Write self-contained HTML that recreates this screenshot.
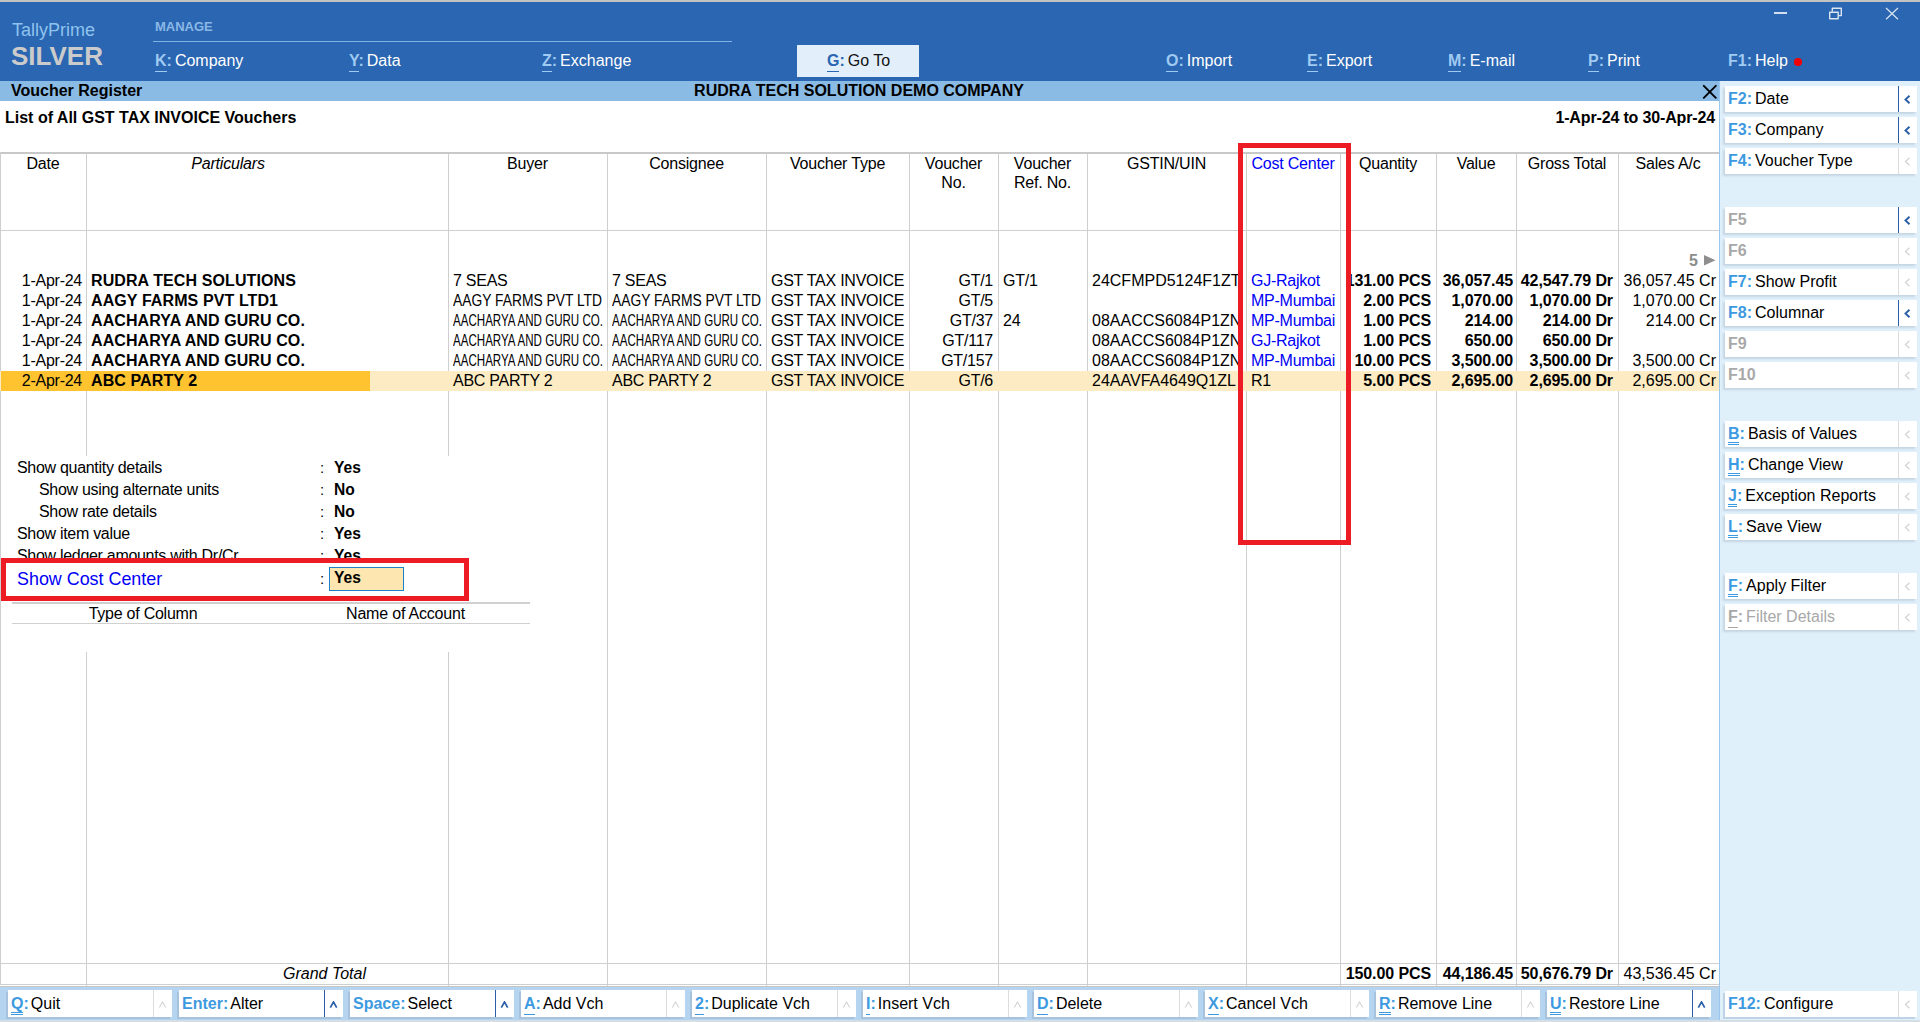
<!DOCTYPE html><html><head><meta charset="utf-8"><style>
*{margin:0;padding:0;box-sizing:border-box}
html,body{width:1920px;height:1022px;overflow:hidden;background:#fff;font-family:"Liberation Sans",sans-serif;color:#000}
.a{position:absolute}
.t{position:absolute;white-space:nowrap;font-size:16px;line-height:20px;height:20px}
.b{font-weight:bold}
.r{text-align:right}
.c{text-align:center}
.i{font-style:italic}
.mk{color:#9fcaf2;font-weight:bold}
.mw{color:#fff}
.ul{position:absolute;height:1px;background:#9fcaf2}
.btn{position:absolute;width:192px;height:26px;background:#fff;box-shadow:-2px 2px 2px #c5d5e2}
.btn .k{position:absolute;left:3px;top:3px;font-size:16px;line-height:20px;color:#3d9ae0;font-weight:bold;white-space:nowrap}
.btn .k span{color:#000;font-weight:normal;margin-left:3px}
.btn .k.dis, .btn .k.dis span{color:#a8a8a8}
.sep{position:absolute;top:0;width:1px;background:#dcdcdc}
.sep.on{background:#2a5fa8}
.chv{position:absolute;white-space:nowrap;color:#d0d0d0}
.chv.on{color:#2a5fa8;font-weight:bold}
.vl{position:absolute;width:1px;background:#cfcfcf}
.hl{position:absolute;height:1px;background:#cfcfcf}
.blue{color:#0000f6}
.sq{display:inline-block;transform-origin:0 0}
</style></head><body>
<div class="a" style="left:0px;top:0px;width:1920px;height:2px;background:#c3c3c3;"></div>
<div class="a" style="left:0px;top:2px;width:1920px;height:79px;background:#2a66b1;"></div>
<div class="t " style="left:12px;top:19px;font-size:18px;line-height:22px;height:22px;color:#8ec3ef">TallyPrime</div>
<div class="t b" style="left:11px;top:42px;font-size:26px;line-height:28px;height:28px;color:#cbcbcb">SILVER</div>
<div class="t b" style="left:155px;top:18px;font-size:13px;line-height:18px;color:#8ab8e6">MANAGE</div>
<div class="a" style="left:153px;top:41px;width:579px;height:1px;background:#7fb2e3;"></div>
<div class="t " style="left:155px;top:51px;"><span class="mk">K:</span><span class="mw" style="margin-left:3px">Company</span></div>
<div class="ul" style="left:155px;top:71px;width:12px"></div>
<div class="t " style="left:349px;top:51px;"><span class="mk">Y:</span><span class="mw" style="margin-left:3px">Data</span></div>
<div class="ul" style="left:349px;top:71px;width:10px"></div>
<div class="t " style="left:542px;top:51px;"><span class="mk">Z:</span><span class="mw" style="margin-left:3px">Exchange</span></div>
<div class="ul" style="left:542px;top:71px;width:10px"></div>
<div class="t " style="left:1166px;top:51px;"><span class="mk">O:</span><span class="mw" style="margin-left:3px">Import</span></div>
<div class="ul" style="left:1166px;top:71px;width:12px"></div>
<div class="t " style="left:1307px;top:51px;"><span class="mk">E:</span><span class="mw" style="margin-left:3px">Export</span></div>
<div class="ul" style="left:1307px;top:71px;width:11px"></div>
<div class="t " style="left:1448px;top:51px;"><span class="mk">M:</span><span class="mw" style="margin-left:3px">E-mail</span></div>
<div class="ul" style="left:1448px;top:71px;width:13px"></div>
<div class="t " style="left:1588px;top:51px;"><span class="mk">P:</span><span class="mw" style="margin-left:3px">Print</span></div>
<div class="ul" style="left:1588px;top:71px;width:11px"></div>
<div class="a" style="left:797px;top:45px;width:122px;height:32px;background:#e2effa;"></div>
<div class="t " style="left:827px;top:51px;"><span style="color:#2a66b1;font-weight:bold">G:</span><span style="margin-left:3px;color:#111">Go To</span></div>
<div class="ul" style="left:827px;top:71px;width:12px;background:#2a66b1"></div>
<div class="t " style="left:1728px;top:51px;"><span class="mk">F1:</span><span class="mw" style="margin-left:3px">Help</span></div>
<div class="a" style="left:1794px;top:58px;width:8px;height:8px;background:#f40000;border-radius:50%"></div>
<div class="a" style="left:1774px;top:12px;width:13px;height:2px;background:#d3dff0;"></div>
<svg class="a" style="left:1828px;top:7px" width="16" height="13"><path d="M1.7 5.2H10.2V11.7H1.7Z" fill="none" stroke="#dbe5f2" stroke-width="1.4" stroke-linejoin="round"/><path d="M4.3 4.6V1.3H13.3V8.6H10.6" fill="none" stroke="#dbe5f2" stroke-width="1.4" stroke-linejoin="round"/></svg>
<svg class="a" style="left:1885px;top:7px" width="14" height="13"><path d="M1 1L13 12.2M13 1L1 12.2" stroke="#d7e2ef" stroke-width="1.25"/></svg>
<div class="a" style="left:0px;top:81px;width:1719px;height:20px;background:#8abbe4;"></div>
<div class="t b" style="left:11px;top:81px;">Voucher Register</div>
<div class="t b c" style="left:559px;top:81px;width:600px;">RUDRA TECH SOLUTION DEMO COMPANY</div>
<svg class="a" style="left:1702px;top:84px" width="15" height="15"><path d="M1.8 1.8L13.8 13.8M13.8 1.8L1.8 13.8" stroke="#000" stroke-width="1.9" stroke-linecap="round"/></svg>
<div class="a" style="left:1719px;top:81px;width:201px;height:941px;background:#dff0fb;border-left:1px solid #9bc7ee"></div>
<div class="btn" style="left:1725px;top:86px">
<div class="k">F2:<span>Date</span></div>
<div class="sep on" style="left:173px;height:26px"></div>
<svg class="a" style="left:179px;top:9px" width="7" height="9"><path d="M5.5 0.8L1.5 4.5L5.5 8.2" fill="none" stroke="#2a5fa8" stroke-width="1.9"/></svg>
</div>
<div class="btn" style="left:1725px;top:117px">
<div class="k">F3:<span>Company</span></div>
<div class="sep on" style="left:173px;height:26px"></div>
<svg class="a" style="left:179px;top:9px" width="7" height="9"><path d="M5.5 0.8L1.5 4.5L5.5 8.2" fill="none" stroke="#2a5fa8" stroke-width="1.9"/></svg>
</div>
<div class="btn" style="left:1725px;top:148px">
<div class="k">F4:<span>Voucher Type</span></div>
<div class="sep" style="left:173px;height:26px"></div>
<svg class="a" style="left:179px;top:9px" width="7" height="9"><path d="M5.5 0.8L1.5 4.5L5.5 8.2" fill="none" stroke="#d4d4d4" stroke-width="1.3"/></svg>
</div>
<div class="btn" style="left:1725px;top:207px">
<div class="k dis">F5</div>
<div class="sep on" style="left:173px;height:26px"></div>
<svg class="a" style="left:179px;top:9px" width="7" height="9"><path d="M5.5 0.8L1.5 4.5L5.5 8.2" fill="none" stroke="#2a5fa8" stroke-width="1.9"/></svg>
</div>
<div class="btn" style="left:1725px;top:238px">
<div class="k dis">F6</div>
<div class="sep" style="left:173px;height:26px"></div>
<svg class="a" style="left:179px;top:9px" width="7" height="9"><path d="M5.5 0.8L1.5 4.5L5.5 8.2" fill="none" stroke="#d4d4d4" stroke-width="1.3"/></svg>
</div>
<div class="btn" style="left:1725px;top:269px">
<div class="k">F7:<span>Show Profit</span></div>
<div class="sep" style="left:173px;height:26px"></div>
<svg class="a" style="left:179px;top:9px" width="7" height="9"><path d="M5.5 0.8L1.5 4.5L5.5 8.2" fill="none" stroke="#d4d4d4" stroke-width="1.3"/></svg>
</div>
<div class="btn" style="left:1725px;top:300px">
<div class="k">F8:<span>Columnar</span></div>
<div class="sep on" style="left:173px;height:26px"></div>
<svg class="a" style="left:179px;top:9px" width="7" height="9"><path d="M5.5 0.8L1.5 4.5L5.5 8.2" fill="none" stroke="#2a5fa8" stroke-width="1.9"/></svg>
</div>
<div class="btn" style="left:1725px;top:331px">
<div class="k dis">F9</div>
<div class="sep" style="left:173px;height:26px"></div>
<svg class="a" style="left:179px;top:9px" width="7" height="9"><path d="M5.5 0.8L1.5 4.5L5.5 8.2" fill="none" stroke="#d4d4d4" stroke-width="1.3"/></svg>
</div>
<div class="btn" style="left:1725px;top:362px">
<div class="k dis">F10</div>
<div class="sep" style="left:173px;height:26px"></div>
<svg class="a" style="left:179px;top:9px" width="7" height="9"><path d="M5.5 0.8L1.5 4.5L5.5 8.2" fill="none" stroke="#d4d4d4" stroke-width="1.3"/></svg>
</div>
<div class="btn" style="left:1725px;top:421px">
<div class="k">B:<span>Basis of Values</span></div>
<div class="sep" style="left:173px;height:26px"></div>
<svg class="a" style="left:179px;top:9px" width="7" height="9"><path d="M5.5 0.8L1.5 4.5L5.5 8.2" fill="none" stroke="#d4d4d4" stroke-width="1.3"/></svg>
</div>
<div class="a" style="left:1728px;top:442px;width:11px;height:1px;background:#3d9ae0;"></div>
<div class="a" style="left:1728px;top:444px;width:11px;height:1px;background:#3d9ae0;"></div>
<div class="btn" style="left:1725px;top:452px">
<div class="k">H:<span>Change View</span></div>
<div class="sep" style="left:173px;height:26px"></div>
<svg class="a" style="left:179px;top:9px" width="7" height="9"><path d="M5.5 0.8L1.5 4.5L5.5 8.2" fill="none" stroke="#d4d4d4" stroke-width="1.3"/></svg>
</div>
<div class="a" style="left:1728px;top:473px;width:12px;height:1px;background:#3d9ae0;"></div>
<div class="a" style="left:1728px;top:475px;width:12px;height:1px;background:#3d9ae0;"></div>
<div class="btn" style="left:1725px;top:483px">
<div class="k">J:<span>Exception Reports</span></div>
<div class="sep" style="left:173px;height:26px"></div>
<svg class="a" style="left:179px;top:9px" width="7" height="9"><path d="M5.5 0.8L1.5 4.5L5.5 8.2" fill="none" stroke="#d4d4d4" stroke-width="1.3"/></svg>
</div>
<div class="a" style="left:1728px;top:504px;width:9px;height:1px;background:#3d9ae0;"></div>
<div class="a" style="left:1728px;top:506px;width:9px;height:1px;background:#3d9ae0;"></div>
<div class="btn" style="left:1725px;top:514px">
<div class="k">L:<span>Save View</span></div>
<div class="sep" style="left:173px;height:26px"></div>
<svg class="a" style="left:179px;top:9px" width="7" height="9"><path d="M5.5 0.8L1.5 4.5L5.5 8.2" fill="none" stroke="#d4d4d4" stroke-width="1.3"/></svg>
</div>
<div class="a" style="left:1728px;top:535px;width:10px;height:1px;background:#3d9ae0;"></div>
<div class="a" style="left:1728px;top:537px;width:10px;height:1px;background:#3d9ae0;"></div>
<div class="btn" style="left:1725px;top:573px">
<div class="k">F:<span>Apply Filter</span></div>
<div class="sep" style="left:173px;height:26px"></div>
<svg class="a" style="left:179px;top:9px" width="7" height="9"><path d="M5.5 0.8L1.5 4.5L5.5 8.2" fill="none" stroke="#d4d4d4" stroke-width="1.3"/></svg>
</div>
<div class="a" style="left:1728px;top:594px;width:10px;height:1px;background:#3d9ae0;"></div>
<div class="a" style="left:1728px;top:596px;width:10px;height:1px;background:#3d9ae0;"></div>
<div class="btn" style="left:1725px;top:604px">
<div class="k dis">F:<span>Filter Details</span></div>
<div class="sep" style="left:173px;height:26px"></div>
<svg class="a" style="left:179px;top:9px" width="7" height="9"><path d="M5.5 0.8L1.5 4.5L5.5 8.2" fill="none" stroke="#d4d4d4" stroke-width="1.3"/></svg>
</div>
<div class="a" style="left:1728px;top:627px;width:10px;height:1px;background:#a6a6a6;"></div>
<div class="t b" style="left:5px;top:108px;">List of All GST TAX INVOICE Vouchers</div>
<div class="t b r" style="left:1415px;top:108px;width:300px;letter-spacing:-0.15px">1-Apr-24 to 30-Apr-24</div>
<div class="a" style="left:0px;top:152px;width:1719px;height:2px;background:#c8c8c8;"></div>
<div class="hl" style="left:0;top:230px;width:1719px"></div>
<div class="vl" style="left:0;top:152px;height:833px"></div>
<div class="vl" style="left:86px;top:154px;height:832px"></div>
<div class="vl" style="left:448px;top:154px;height:832px"></div>
<div class="vl" style="left:607px;top:154px;height:832px"></div>
<div class="vl" style="left:766px;top:154px;height:832px"></div>
<div class="vl" style="left:909px;top:154px;height:832px"></div>
<div class="vl" style="left:998px;top:154px;height:832px"></div>
<div class="vl" style="left:1087px;top:154px;height:832px"></div>
<div class="vl" style="left:1246px;top:154px;height:832px"></div>
<div class="vl" style="left:1340px;top:154px;height:832px"></div>
<div class="vl" style="left:1436px;top:154px;height:832px"></div>
<div class="vl" style="left:1516px;top:154px;height:832px"></div>
<div class="vl" style="left:1618px;top:154px;height:832px"></div>
<div class="hl" style="left:0;top:963px;width:1719px"></div>
<div class="hl" style="left:0;top:984px;width:1719px"></div>
<div class="t c " style="left:0px;top:154px;width:86px;height:auto;line-height:19px;letter-spacing:-0.2px">Date</div>
<div class="t c i" style="left:86px;top:154px;width:284px;height:auto;line-height:19px;letter-spacing:-0.2px">Particulars</div>
<div class="t c " style="left:448px;top:154px;width:159px;height:auto;line-height:19px;letter-spacing:-0.2px">Buyer</div>
<div class="t c " style="left:607px;top:154px;width:159px;height:auto;line-height:19px;letter-spacing:-0.2px">Consignee</div>
<div class="t c " style="left:766px;top:154px;width:143px;height:auto;line-height:19px;letter-spacing:-0.2px">Voucher Type</div>
<div class="t c " style="left:909px;top:154px;width:89px;height:auto;line-height:19px;letter-spacing:-0.2px">Voucher<br>No.</div>
<div class="t c " style="left:998px;top:154px;width:89px;height:auto;line-height:19px;letter-spacing:-0.2px">Voucher<br>Ref. No.</div>
<div class="t c " style="left:1087px;top:154px;width:159px;height:auto;line-height:19px;letter-spacing:-0.2px">GSTIN/UIN</div>
<div class="t c blue" style="left:1246px;top:154px;width:94px;height:auto;line-height:19px;letter-spacing:-0.2px">Cost Center</div>
<div class="t c " style="left:1340px;top:154px;width:96px;height:auto;line-height:19px;letter-spacing:-0.2px">Quantity</div>
<div class="t c " style="left:1436px;top:154px;width:80px;height:auto;line-height:19px;letter-spacing:-0.2px">Value</div>
<div class="t c " style="left:1516px;top:154px;width:102px;height:auto;line-height:19px;letter-spacing:-0.2px">Gross Total</div>
<div class="t c " style="left:1618px;top:154px;width:100px;height:auto;line-height:19px;letter-spacing:-0.2px">Sales A/c</div>
<div class="t b r" style="left:1600px;top:251px;width:98px;color:#8c8c8c">5</div>
<svg class="a" style="left:1704px;top:255px" width="12" height="11"><path d="M0 0L11.5 5.3L0 10.6Z" fill="#8e8e8e"/></svg>
<div class="a" style="left:0px;top:371px;width:1719px;height:20px;background:#fdecc3;"></div>
<div class="a" style="left:1px;top:371px;width:369px;height:20px;background:#fec32f;"></div>
<div class="t r" style="left:1px;top:271px;width:81px;letter-spacing:-0.25px">1-Apr-24</div>
<div class="t b" style="left:91px;top:271px;letter-spacing:0.1px">RUDRA TECH SOLUTIONS</div>
<div class="t " style="left:453px;top:271px;letter-spacing:-0.25px">7 SEAS</div>
<div class="t " style="left:612px;top:271px;letter-spacing:-0.25px">7 SEAS</div>
<div class="t " style="left:771px;top:271px;letter-spacing:-0.25px">GST TAX INVOICE</div>
<div class="t r" style="left:909px;top:271px;width:84px;letter-spacing:-0.25px">GT/1</div>
<div class="t " style="left:1003px;top:271px;letter-spacing:-0.25px">GT/1</div>
<div class="t " style="left:1092px;top:271px;overflow:hidden;width:150px;">24CFMPD5124F1ZT</div>
<div class="t blue" style="left:1251px;top:271px;letter-spacing:-0.25px">GJ-Rajkot</div>
<div class="t b r" style="left:1340px;top:271px;width:91px;overflow:hidden;letter-spacing:-0.1px">131.00 PCS</div>
<div class="t b r" style="left:1438px;top:271px;width:75px;letter-spacing:-0.1px">36,057.45</div>
<div class="t b r" style="left:1516px;top:271px;width:97px;letter-spacing:-0.1px">42,547.79 Dr</div>
<div class="t r" style="left:1620px;top:271px;width:96px;">36,057.45 Cr</div>
<div class="t r" style="left:1px;top:291px;width:81px;letter-spacing:-0.25px">1-Apr-24</div>
<div class="t b" style="left:91px;top:291px;letter-spacing:0.1px">AAGY FARMS PVT LTD1</div>
<div class="t " style="left:453px;top:291px;"><span class="sq" style="transform:scaleX(0.864)">AAGY FARMS PVT LTD</span></div>
<div class="t " style="left:612px;top:291px;"><span class="sq" style="transform:scaleX(0.864)">AAGY FARMS PVT LTD</span></div>
<div class="t " style="left:771px;top:291px;letter-spacing:-0.25px">GST TAX INVOICE</div>
<div class="t r" style="left:909px;top:291px;width:84px;letter-spacing:-0.25px">GT/5</div>
<div class="t " style="left:1003px;top:291px;letter-spacing:-0.25px"></div>
<div class="t " style="left:1092px;top:291px;overflow:hidden;width:150px;"></div>
<div class="t blue" style="left:1251px;top:291px;letter-spacing:-0.25px">MP-Mumbai</div>
<div class="t b r" style="left:1340px;top:291px;width:91px;overflow:hidden;letter-spacing:-0.1px">2.00 PCS</div>
<div class="t b r" style="left:1438px;top:291px;width:75px;letter-spacing:-0.1px">1,070.00</div>
<div class="t b r" style="left:1516px;top:291px;width:97px;letter-spacing:-0.1px">1,070.00 Dr</div>
<div class="t r" style="left:1620px;top:291px;width:96px;">1,070.00 Cr</div>
<div class="t r" style="left:1px;top:311px;width:81px;letter-spacing:-0.25px">1-Apr-24</div>
<div class="t b" style="left:91px;top:311px;letter-spacing:0.1px">AACHARYA AND GURU CO.</div>
<div class="t " style="left:453px;top:311px;"><span class="sq" style="transform:scaleX(0.723)">AACHARYA AND GURU CO.</span></div>
<div class="t " style="left:612px;top:311px;"><span class="sq" style="transform:scaleX(0.723)">AACHARYA AND GURU CO.</span></div>
<div class="t " style="left:771px;top:311px;letter-spacing:-0.25px">GST TAX INVOICE</div>
<div class="t r" style="left:909px;top:311px;width:84px;letter-spacing:-0.25px">GT/37</div>
<div class="t " style="left:1003px;top:311px;letter-spacing:-0.25px">24</div>
<div class="t " style="left:1092px;top:311px;overflow:hidden;width:150px;">08AACCS6084P1ZN</div>
<div class="t blue" style="left:1251px;top:311px;letter-spacing:-0.25px">MP-Mumbai</div>
<div class="t b r" style="left:1340px;top:311px;width:91px;overflow:hidden;letter-spacing:-0.1px">1.00 PCS</div>
<div class="t b r" style="left:1438px;top:311px;width:75px;letter-spacing:-0.1px">214.00</div>
<div class="t b r" style="left:1516px;top:311px;width:97px;letter-spacing:-0.1px">214.00 Dr</div>
<div class="t r" style="left:1620px;top:311px;width:96px;">214.00 Cr</div>
<div class="t r" style="left:1px;top:331px;width:81px;letter-spacing:-0.25px">1-Apr-24</div>
<div class="t b" style="left:91px;top:331px;letter-spacing:0.1px">AACHARYA AND GURU CO.</div>
<div class="t " style="left:453px;top:331px;"><span class="sq" style="transform:scaleX(0.723)">AACHARYA AND GURU CO.</span></div>
<div class="t " style="left:612px;top:331px;"><span class="sq" style="transform:scaleX(0.723)">AACHARYA AND GURU CO.</span></div>
<div class="t " style="left:771px;top:331px;letter-spacing:-0.25px">GST TAX INVOICE</div>
<div class="t r" style="left:909px;top:331px;width:84px;letter-spacing:-0.25px">GT/117</div>
<div class="t " style="left:1003px;top:331px;letter-spacing:-0.25px"></div>
<div class="t " style="left:1092px;top:331px;overflow:hidden;width:150px;">08AACCS6084P1ZN</div>
<div class="t blue" style="left:1251px;top:331px;letter-spacing:-0.25px">GJ-Rajkot</div>
<div class="t b r" style="left:1340px;top:331px;width:91px;overflow:hidden;letter-spacing:-0.1px">1.00 PCS</div>
<div class="t b r" style="left:1438px;top:331px;width:75px;letter-spacing:-0.1px">650.00</div>
<div class="t b r" style="left:1516px;top:331px;width:97px;letter-spacing:-0.1px">650.00 Dr</div>
<div class="t r" style="left:1620px;top:331px;width:96px;"></div>
<div class="t r" style="left:1px;top:351px;width:81px;letter-spacing:-0.25px">1-Apr-24</div>
<div class="t b" style="left:91px;top:351px;letter-spacing:0.1px">AACHARYA AND GURU CO.</div>
<div class="t " style="left:453px;top:351px;"><span class="sq" style="transform:scaleX(0.723)">AACHARYA AND GURU CO.</span></div>
<div class="t " style="left:612px;top:351px;"><span class="sq" style="transform:scaleX(0.723)">AACHARYA AND GURU CO.</span></div>
<div class="t " style="left:771px;top:351px;letter-spacing:-0.25px">GST TAX INVOICE</div>
<div class="t r" style="left:909px;top:351px;width:84px;letter-spacing:-0.25px">GT/157</div>
<div class="t " style="left:1003px;top:351px;letter-spacing:-0.25px"></div>
<div class="t " style="left:1092px;top:351px;overflow:hidden;width:150px;">08AACCS6084P1ZN</div>
<div class="t blue" style="left:1251px;top:351px;letter-spacing:-0.25px">MP-Mumbai</div>
<div class="t b r" style="left:1340px;top:351px;width:91px;overflow:hidden;letter-spacing:-0.1px">10.00 PCS</div>
<div class="t b r" style="left:1438px;top:351px;width:75px;letter-spacing:-0.1px">3,500.00</div>
<div class="t b r" style="left:1516px;top:351px;width:97px;letter-spacing:-0.1px">3,500.00 Dr</div>
<div class="t r" style="left:1620px;top:351px;width:96px;">3,500.00 Cr</div>
<div class="t r" style="left:1px;top:371px;width:81px;letter-spacing:-0.25px">2-Apr-24</div>
<div class="t b" style="left:91px;top:371px;letter-spacing:0.1px">ABC PARTY 2</div>
<div class="t " style="left:453px;top:371px;letter-spacing:-0.25px">ABC PARTY 2</div>
<div class="t " style="left:612px;top:371px;letter-spacing:-0.25px">ABC PARTY 2</div>
<div class="t " style="left:771px;top:371px;letter-spacing:-0.25px">GST TAX INVOICE</div>
<div class="t r" style="left:909px;top:371px;width:84px;letter-spacing:-0.25px">GT/6</div>
<div class="t " style="left:1003px;top:371px;letter-spacing:-0.25px"></div>
<div class="t " style="left:1092px;top:371px;overflow:hidden;width:150px;">24AAVFA4649Q1ZL</div>
<div class="t " style="left:1251px;top:371px;letter-spacing:-0.25px">R1</div>
<div class="t b r" style="left:1340px;top:371px;width:91px;overflow:hidden;letter-spacing:-0.1px">5.00 PCS</div>
<div class="t b r" style="left:1438px;top:371px;width:75px;letter-spacing:-0.1px">2,695.00</div>
<div class="t b r" style="left:1516px;top:371px;width:97px;letter-spacing:-0.1px">2,695.00 Dr</div>
<div class="t r" style="left:1620px;top:371px;width:96px;">2,695.00 Cr</div>
<div class="a" style="left:1px;top:456px;width:529px;height:196px;background:#fff;"></div>
<div class="t " style="left:17px;top:458px;font-size:16px;letter-spacing:-0.3px">Show quantity details</div>
<div class="t " style="left:320px;top:458px;font-size:15px">:</div>
<div class="t b" style="left:334px;top:458px;font-size:15.6px">Yes</div>
<div class="t " style="left:39px;top:480px;font-size:16px;letter-spacing:-0.3px">Show using alternate units</div>
<div class="t " style="left:320px;top:480px;font-size:15px">:</div>
<div class="t b" style="left:334px;top:480px;font-size:15.6px">No</div>
<div class="t " style="left:39px;top:502px;font-size:16px;letter-spacing:-0.3px">Show rate details</div>
<div class="t " style="left:320px;top:502px;font-size:15px">:</div>
<div class="t b" style="left:334px;top:502px;font-size:15.6px">No</div>
<div class="t " style="left:17px;top:524px;font-size:16px;letter-spacing:-0.3px">Show item value</div>
<div class="t " style="left:320px;top:524px;font-size:15px">:</div>
<div class="t b" style="left:334px;top:524px;font-size:15.6px">Yes</div>
<div class="t " style="left:17px;top:546px;font-size:16px;letter-spacing:-0.3px">Show ledger amounts with Dr/Cr</div>
<div class="t " style="left:320px;top:546px;font-size:15px">:</div>
<div class="t b" style="left:334px;top:546px;font-size:15.6px">Yes</div>
<div class="a" style="left:1px;top:560px;width:529px;height:40px;background:#fff;"></div>
<div class="t blue" style="left:17px;top:568px;font-size:17.9px;line-height:22px;height:22px">Show Cost Center</div>
<div class="t " style="left:320px;top:569px;font-size:15px">:</div>
<div class="a" style="left:329px;top:567px;width:75px;height:24px;background:#fde6b0;border:1px solid #1b82c8"></div>
<div class="t b" style="left:334px;top:568px;font-size:15.6px">Yes</div>
<div class="a" style="left:12px;top:602px;width:518px;height:2px;background:#d0d0d0;"></div>
<div class="t c" style="left:12px;top:604px;width:262px;font-size:16px;letter-spacing:-0.25px">Type of Column</div>
<div class="t c" style="left:300px;top:604px;width:211px;font-size:16px;letter-spacing:-0.2px">Name of Account</div>
<div class="a" style="left:12px;top:623px;width:518px;height:1px;background:#d0d0d0;"></div>
<div class="a" style="left:1238px;top:143px;width:113px;height:402px;border:5px solid #ec1b24"></div>
<div class="a" style="left:1px;top:558px;width:468px;height:43px;border:5px solid #ec1b24"></div>
<div class="t i r" style="left:86px;top:964px;width:280px;">Grand Total</div>
<div class="t b r" style="left:1340px;top:964px;width:91px;letter-spacing:-0.1px">150.00 PCS</div>
<div class="t b r" style="left:1438px;top:964px;width:75px;letter-spacing:-0.1px">44,186.45</div>
<div class="t b r" style="left:1516px;top:964px;width:97px;letter-spacing:-0.1px">50,676.79 Dr</div>
<div class="t r" style="left:1620px;top:964px;width:96px;">43,536.45 Cr</div>
<div class="a" style="left:0px;top:984px;width:1719px;height:1px;background:#cfcfcf;"></div>
<div class="a" style="left:0px;top:986px;width:1719px;height:1px;background:#c6c6c6;"></div>
<div class="a" style="left:0px;top:987px;width:1719px;height:35px;background:#b5d4ef;"></div>
<div class="a" style="left:0px;top:1020px;width:1920px;height:2px;background:#d5dde5;"></div>
<div class="btn" style="left:8px;top:990px;width:164px;height:27px;box-shadow:-2px 2px 0 #a6c2dc">
<div class="k" style="left:3px;top:4px">Q:<span style="margin-left:2px">Quit</span></div>
<div class="sep" style="left:145px;height:27px"></div>
<svg class="a" style="left:150px;top:11px" width="9" height="8"><path d="M1.3 6.6L4.5 1L7.7 6.6" fill="none" stroke="#d4d4d4" stroke-width="1.1"/></svg>
</div>
<div class="a" style="left:11px;top:1012px;width:12px;height:1px;background:#3d9ae0;"></div>
<div class="a" style="left:11px;top:1014px;width:12px;height:1px;background:#3d9ae0;"></div>
<div class="btn" style="left:179px;top:990px;width:164px;height:27px;box-shadow:-2px 2px 0 #a6c2dc">
<div class="k" style="left:3px;top:4px">Enter:<span style="margin-left:2px">Alter</span></div>
<div class="sep on" style="left:145px;height:27px"></div>
<svg class="a" style="left:150px;top:11px" width="9" height="8"><path d="M1.3 6.6L4.5 1L7.7 6.6" fill="none" stroke="#2a5fa8" stroke-width="1.7"/></svg>
</div>
<div class="btn" style="left:350px;top:990px;width:164px;height:27px;box-shadow:-2px 2px 0 #a6c2dc">
<div class="k" style="left:3px;top:4px">Space:<span style="margin-left:2px">Select</span></div>
<div class="sep on" style="left:145px;height:27px"></div>
<svg class="a" style="left:150px;top:11px" width="9" height="8"><path d="M1.3 6.6L4.5 1L7.7 6.6" fill="none" stroke="#2a5fa8" stroke-width="1.7"/></svg>
</div>
<div class="btn" style="left:521px;top:990px;width:164px;height:27px;box-shadow:-2px 2px 0 #a6c2dc">
<div class="k" style="left:3px;top:4px">A:<span style="margin-left:2px">Add Vch</span></div>
<div class="sep" style="left:145px;height:27px"></div>
<svg class="a" style="left:150px;top:11px" width="9" height="8"><path d="M1.3 6.6L4.5 1L7.7 6.6" fill="none" stroke="#d4d4d4" stroke-width="1.1"/></svg>
</div>
<div class="a" style="left:524px;top:1014px;width:11px;height:1px;background:#3d9ae0;"></div>
<div class="btn" style="left:692px;top:990px;width:164px;height:27px;box-shadow:-2px 2px 0 #a6c2dc">
<div class="k" style="left:3px;top:4px">2:<span style="margin-left:2px">Duplicate Vch</span></div>
<div class="sep" style="left:145px;height:27px"></div>
<svg class="a" style="left:150px;top:11px" width="9" height="8"><path d="M1.3 6.6L4.5 1L7.7 6.6" fill="none" stroke="#d4d4d4" stroke-width="1.1"/></svg>
</div>
<div class="a" style="left:695px;top:1014px;width:9px;height:1px;background:#3d9ae0;"></div>
<div class="btn" style="left:863px;top:990px;width:164px;height:27px;box-shadow:-2px 2px 0 #a6c2dc">
<div class="k" style="left:3px;top:4px">I:<span style="margin-left:2px">Insert Vch</span></div>
<div class="sep" style="left:145px;height:27px"></div>
<svg class="a" style="left:150px;top:11px" width="9" height="8"><path d="M1.3 6.6L4.5 1L7.7 6.6" fill="none" stroke="#d4d4d4" stroke-width="1.1"/></svg>
</div>
<div class="a" style="left:866px;top:1014px;width:4px;height:1px;background:#3d9ae0;"></div>
<div class="btn" style="left:1034px;top:990px;width:164px;height:27px;box-shadow:-2px 2px 0 #a6c2dc">
<div class="k" style="left:3px;top:4px">D:<span style="margin-left:2px">Delete</span></div>
<div class="sep" style="left:145px;height:27px"></div>
<svg class="a" style="left:150px;top:11px" width="9" height="8"><path d="M1.3 6.6L4.5 1L7.7 6.6" fill="none" stroke="#d4d4d4" stroke-width="1.1"/></svg>
</div>
<div class="a" style="left:1037px;top:1014px;width:11px;height:1px;background:#3d9ae0;"></div>
<div class="btn" style="left:1205px;top:990px;width:164px;height:27px;box-shadow:-2px 2px 0 #a6c2dc">
<div class="k" style="left:3px;top:4px">X:<span style="margin-left:2px">Cancel Vch</span></div>
<div class="sep" style="left:145px;height:27px"></div>
<svg class="a" style="left:150px;top:11px" width="9" height="8"><path d="M1.3 6.6L4.5 1L7.7 6.6" fill="none" stroke="#d4d4d4" stroke-width="1.1"/></svg>
</div>
<div class="a" style="left:1208px;top:1014px;width:11px;height:1px;background:#3d9ae0;"></div>
<div class="btn" style="left:1376px;top:990px;width:164px;height:27px;box-shadow:-2px 2px 0 #a6c2dc">
<div class="k" style="left:3px;top:4px">R:<span style="margin-left:2px">Remove Line</span></div>
<div class="sep" style="left:145px;height:27px"></div>
<svg class="a" style="left:150px;top:11px" width="9" height="8"><path d="M1.3 6.6L4.5 1L7.7 6.6" fill="none" stroke="#d4d4d4" stroke-width="1.1"/></svg>
</div>
<div class="a" style="left:1379px;top:1012px;width:12px;height:1px;background:#3d9ae0;"></div>
<div class="a" style="left:1379px;top:1014px;width:12px;height:1px;background:#3d9ae0;"></div>
<div class="btn" style="left:1547px;top:990px;width:164px;height:27px;box-shadow:-2px 2px 0 #a6c2dc">
<div class="k" style="left:3px;top:4px">U:<span style="margin-left:2px">Restore Line</span></div>
<div class="sep on" style="left:145px;height:27px"></div>
<svg class="a" style="left:150px;top:11px" width="9" height="8"><path d="M1.3 6.6L4.5 1L7.7 6.6" fill="none" stroke="#2a5fa8" stroke-width="1.7"/></svg>
</div>
<div class="a" style="left:1550px;top:1012px;width:11px;height:1px;background:#3d9ae0;"></div>
<div class="a" style="left:1550px;top:1014px;width:11px;height:1px;background:#3d9ae0;"></div>
<div class="btn" style="left:1725px;top:991px;height:26px;box-shadow:-2px 2px 0 #bfd3e6">
<div class="k" style="left:3px;top:3px">F12:<span>Configure</span></div>
<div class="sep" style="left:173px;height:26px"></div>
<svg class="a" style="left:179px;top:9px" width="7" height="9"><path d="M5.5 0.8L1.5 4.5L5.5 8.2" fill="none" stroke="#d4d4d4" stroke-width="1.3"/></svg>
</div>
</body></html>
